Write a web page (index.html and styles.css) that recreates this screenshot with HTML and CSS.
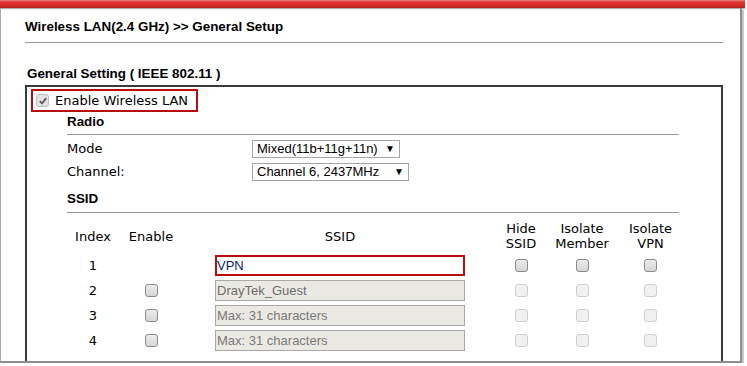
FILE: index.html
```html
<!DOCTYPE html>
<html lang="en">
<head>
    <meta charset="UTF-8">
    <title>Wireless LAN (2.4 GHz) - General Setup</title>
    <link rel="stylesheet" href="styles.css">
</head>
<body>
    <div class="topbar"></div>
    <div class="window">
        <div class="page">
            <h1 class="title">Wireless LAN(2.4 GHz) &gt;&gt; General Setup</h1>
            <hr class="rule">

            <h2 class="legend">General Setting ( IEEE 802.11 )</h2>
            <div class="box">
                <label class="enable-wlan">
                    <span class="cb checked">
                        <svg width="8" height="8" viewBox="0 0 8 8"><path d="M0.8 4.2 L3 6.4 L7.2 1.2" fill="none" stroke="#5e5e5e" stroke-width="1.9"/></svg>
                    </span>
                    Enable Wireless LAN
                </label>

                <div class="section">
                    <h3 class="heading">Radio</h3>
                    <div class="form-row">
                        <span class="label">Mode</span>
                        <span class="select mode">Mixed(11b+11g+11n)<span class="arrow">&#9660;</span></span>
                    </div>
                    <div class="form-row">
                        <span class="label">Channel:</span>
                        <span class="select channel">Channel 6, 2437MHz<span class="arrow">&#9660;</span></span>
                    </div>

                    <h3 class="heading ssid-heading">SSID</h3>
                    <div class="ssid-table">
                        <div class="grid head">
                            <span>Index</span>
                            <span>Enable</span>
                            <span>SSID</span>
                            <span>Hide<br>SSID</span>
                            <span>Isolate<br>Member</span>
                            <span>Isolate<br>VPN</span>
                        </div>
                        <div class="grid row">
                            <span>1</span>
                            <span></span>
                            <span><input class="ssid active" type="text" value="VPN"></span>
                            <span><span class="cb on"></span></span>
                            <span><span class="cb on"></span></span>
                            <span><span class="cb on"></span></span>
                        </div>
                        <div class="grid row">
                            <span>2</span>
                            <span><span class="cb on"></span></span>
                            <span><input class="ssid" type="text" value="DrayTek_Guest" disabled></span>
                            <span><span class="cb off"></span></span>
                            <span><span class="cb off"></span></span>
                            <span><span class="cb off"></span></span>
                        </div>
                        <div class="grid row">
                            <span>3</span>
                            <span><span class="cb on"></span></span>
                            <span><input class="ssid" type="text" placeholder="Max: 31 characters" disabled></span>
                            <span><span class="cb off"></span></span>
                            <span><span class="cb off"></span></span>
                            <span><span class="cb off"></span></span>
                        </div>
                        <div class="grid row">
                            <span>4</span>
                            <span><span class="cb on"></span></span>
                            <span><input class="ssid" type="text" placeholder="Max: 31 characters" disabled></span>
                            <span><span class="cb off"></span></span>
                            <span><span class="cb off"></span></span>
                            <span><span class="cb off"></span></span>
                        </div>
                    </div>
                </div>
            </div>
        </div>
    </div>
</body>
</html>
```

FILE: styles.css
```css
/* General Styles */
body {
    margin: 0;
    background: #fff;
    color: #000;
    font-family: "DejaVu Sans", Verdana, sans-serif;
    font-size: 13px;
    overflow: hidden;
}
.topbar {
    width: 745px;
    height: 8px;
    background: linear-gradient(#ee8a86, #df3431 25%, #d42a26 75%, #a81f1c);
    box-shadow: 0 1px 1px #b0b0b0;
}
.window {
    width: 742px;
    height: 355px;
    box-sizing: border-box;
    border-left: 1px solid #a8a8a8;
    border-right: 2px solid #8e8e8e;
    border-bottom: 2px solid #8e8e8e;
    box-shadow: 2px 2px 0 #c8c8c8;
    overflow: hidden;
}
.page {
    padding: 11px 17px 0 24px;
}

/* Headings */
.title {
    margin: 0;
    font: bold 13.4px/16px "Liberation Sans", Arial, sans-serif;
}
.rule {
    margin: 7px 0 0;
    border: none;
    border-top: 1px solid #999;
}
.legend {
    margin: 23px 0 0 2px;
    font: bold 13.4px/16px "Liberation Sans", Arial, sans-serif;
}

/* Setting box */
.box {
    margin-top: 3px;
    height: 300px;
    border: 2px solid #3a3a3a;
    border-bottom: none;
}
.enable-wlan {
    display: inline-flex;
    align-items: center;
    gap: 6px;
    box-sizing: border-box;
    width: 167px;
    height: 23px;
    margin: 2px 0 0 4px;
    padding-left: 3px;
    border: 2px solid #b80d0d;
    line-height: 16px;
}
.section {
    padding: 0 42px 0 40px;
}
.heading {
    margin: 2px 0 0;
    padding-bottom: 4px;
    border-bottom: 1px solid #999;
    font: bold 13.4px/16px "Liberation Sans", Arial, sans-serif;
}
.ssid-heading {
    margin-top: 8px;
    padding-bottom: 5px;
}

/* Radio rows */
.form-row {
    display: flex;
    align-items: center;
    height: 23px;
}
.form-row:first-of-type {
    margin-top: 2px;
}
.label {
    width: 185px;
}
.select {
    display: inline-flex;
    align-items: center;
    justify-content: space-between;
    box-sizing: border-box;
    height: 18px;
    padding: 0 4px 0 4px;
    border: 1px solid #a6a6a6;
    font: 13px "Liberation Sans", Arial, sans-serif;
}
.select.mode {
    width: 148px;
}
.select.channel {
    width: 157px;
}
.arrow {
    font-size: 10px;
}

/* Checkboxes */
.cb {
    display: inline-flex;
    align-items: center;
    justify-content: center;
    box-sizing: border-box;
    width: 13px;
    height: 13px;
    border-radius: 3px;
    vertical-align: middle;
}
.cb.on {
    border: 1px solid #8c8c8c;
    background: linear-gradient(#ececec, #d6d6d6);
}
.cb.off,
.cb.checked {
    border: 1px solid #cfcfcf;
    background: #f1f1f1;
}
.cb.checked {
    border-color: #bdbdbd;
    background: #e4e4e4;
}

/* SSID table */
.ssid-table {
    margin-top: 8px;
}
.grid {
    display: grid;
    grid-template-columns: 52px 64px 314px 48px 74px 63px;
    align-items: center;
    text-align: center;
}
.head {
    height: 30px;
    line-height: 15px;
}
.row {
    height: 25px;
}
.head + .row {
    margin-top: 2px;
}
.grid > span {
    display: flex;
    align-items: center;
    justify-content: center;
}
.ssid {
    box-sizing: border-box;
    width: 250px;
    height: 21px;
    margin: 0;
    padding: 0 0 0 1px;
    border: 1px solid #a9a9a9;
    background: #ebe9e3;
    color: #6d6d6d;
    font: 13px "Liberation Sans", Arial, sans-serif;
    outline: none;
}
.ssid::placeholder {
    color: #7a7a7a;
}
.ssid.active {
    padding: 0;
    border: 2px solid #b80d0d;
    background: #fff;
    color: #0a246a;
}
```
